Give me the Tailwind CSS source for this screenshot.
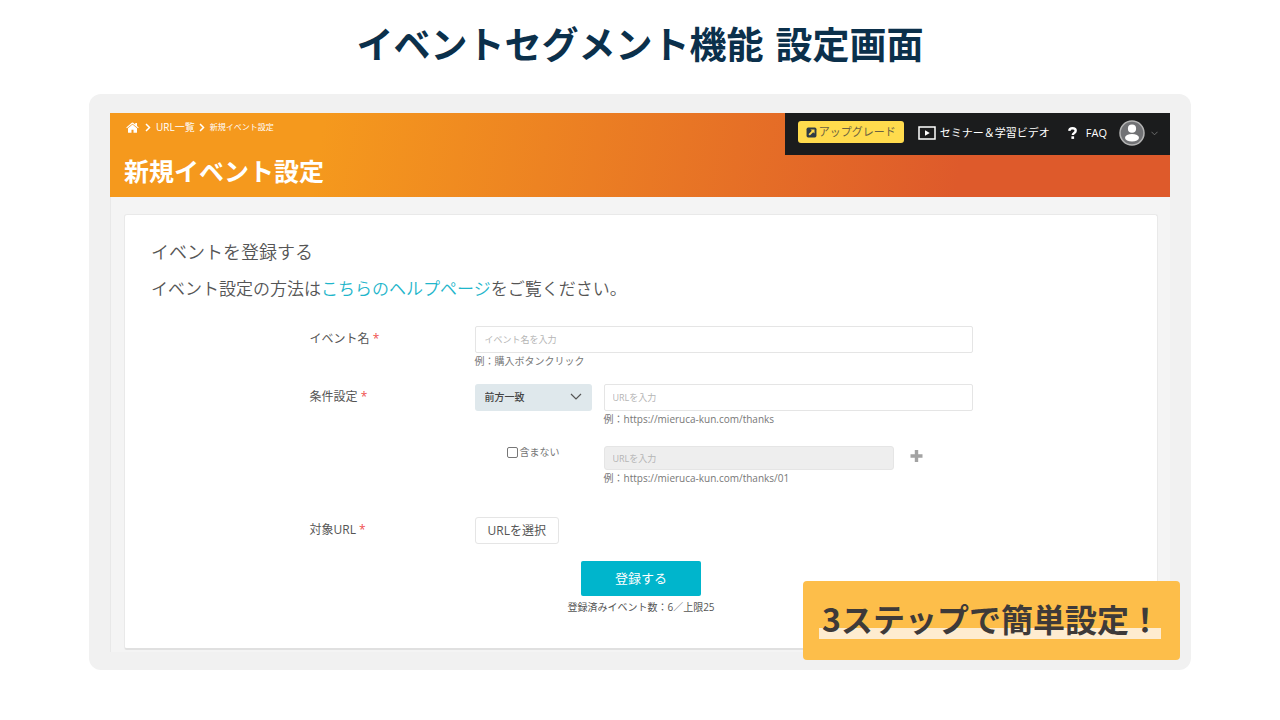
<!DOCTYPE html>
<html lang="ja">
<head>
  <meta charset="UTF-8">
  <meta name="viewport" content="width=device-width, initial-scale=1.0">
  <title>イベントセグメント機能 設定画面</title>
  <script src="https://cdn.jsdelivr.net/npm/@tailwindcss/browser@4"></script>
</head>
<body class="min-h-screen bg-white font-['Open_Sans','Noto_Sans_CJK_JP',sans-serif] text-[#555]">
  <div class="px-[89px] pt-[18px] pb-12">
    <h1 class="flex justify-center gap-3 text-[37px] leading-[50px] font-bold text-[#0b304b] font-['Noto_Sans_CJK_JP',sans-serif]">
      <span>イベントセグメント機能</span>
      <span>設定画面</span>
    </h1>

    <div class="relative mt-[26px] rounded-xl bg-[#f1f1f1] px-[21px] pt-[19px] pb-[18px]">
      <!-- Header -->
      <header class="flex h-[84px] items-start justify-between bg-linear-100/srgb from-[#f5991d] from-20% to-[#de5a2b] to-80% text-white">
        <div class="pl-[14px] pt-[7px]">
          <nav class="flex h-[14px] items-center gap-1 pl-[2px] text-[10px] leading-[14px]" aria-label="パンくず">
            <a href="#" aria-label="ホーム">
              <svg class="h-[11px] w-[13px]" viewBox="0 0 26 22" fill="currentColor">
                <path d="M13 5l-9 7.500v8a1 1 0 001 1h6v-6h4v6h6a1 1 0 001-1v-8zM25.500 11l-3.500-3V2h-3.500v3.200L14.500 1.500a2.200 2.200 0 00-3 0L.500 11l1.300 1.500L13 3.600l11.200 8.900z"/>
              </svg>
            </a>
            <svg class="h-[9px] w-[9px]" viewBox="0 0 9 9" fill="none" stroke="currentColor" stroke-width="1.500"><path d="M3 1l3.500 3.500L3 8"/></svg>
            <a href="#">URL一覧</a>
            <svg class="-ml-[2px] h-[9px] w-[9px]" viewBox="0 0 9 9" fill="none" stroke="currentColor" stroke-width="1.500"><path d="M3 1l3.500 3.500L3 8"/></svg>
            <span class="text-[8px]">新規イベント設定</span>
          </nav>
          <h2 class="mt-5 text-[25px] leading-[34px] font-bold">新規イベント設定</h2>
        </div>

        <div class="flex h-[42px] items-center bg-[#1b1c1d] pr-3 pb-[2px] pl-[13px] text-[11px]">
          <button type="button" class="-mt-[2px] flex h-[22px] items-center gap-[2px] rounded-[3px] bg-[#ffdb4d] px-2 text-[#6b6140]">
            <svg class="h-[11px] w-[11px] text-[#2f3b45]" viewBox="0 0 20 20">
              <rect x="1" y="1" width="18" height="18" rx="3" fill="currentColor"/>
              <path d="M8 4.500h7.500V12l-2.500-2.500-6 6L4.500 13l6-6z" fill="#ffdb4d"/>
            </svg>
            アップグレード
          </button>
          <a href="#" class="ml-[14px] flex items-center gap-1">
            <svg class="h-[14px] w-[18px]" viewBox="0 0 18 14" fill="none">
              <rect x="1" y="1" width="16" height="12" stroke="currentColor" stroke-width="1.500"/>
              <path d="M7 4.200v5.600L11.800 7z" fill="currentColor"/>
            </svg>
            セミナー＆学習ビデオ
          </a>
          <a href="#" class="ml-[18px] flex items-center gap-[9px]">
            <svg class="h-3 w-[9px]" viewBox="0 0 9 12" fill="none">
              <path d="M1.300 3.900C1.400 2.200 2.600 1.300 4.500 1.300c2 0 3.200 1 3.200 2.500 0 2.200-2.900 2-2.900 4.200" stroke="currentColor" stroke-width="2.400"/>
              <rect x="3.400" y="9.300" width="2.700" height="2.600" fill="currentColor"/>
            </svg>
            FAQ
          </a>
          <button type="button" class="ml-3 flex items-center gap-[6px]" aria-label="アカウント">
            <svg class="h-[26px] w-[26px]" viewBox="0 0 26 26">
              <circle cx="13" cy="13" r="12" fill="#717275" stroke="#b5b5b5" stroke-width="1.500"/>
              <circle cx="13" cy="8.700" r="4.100" fill="#fff"/>
              <ellipse cx="13" cy="17.800" rx="7" ry="3.800" fill="#fff"/>
            </svg>
            <svg class="h-[7px] w-[7px] text-[#777]" viewBox="0 0 8 8" fill="none" stroke="currentColor"><path d="M0.500 2l3.500 3.500L7.500 2"/></svg>
          </button>
        </div>
      </header>

      <!-- Form card -->
      <main class="border-l border-[#e8e8e8] bg-[#f4f4f4] pt-[17px] pr-3 pb-[2px] pl-[13px]">
        <div class="rounded-[3px] border border-b-2 border-[#e9e9e9] border-b-[#e0e0e0] bg-white px-[26px] pt-[22px] pb-[34px]">
          <h3 class="text-[18px] leading-[30px] font-[350]">イベントを登録する</h3>
          <p class="mt-2 text-[17px] leading-[28px] font-[350]">イベント設定の方法は<a href="#" class="text-[#1fb6cb]">こちらのヘルプページ</a>をご覧ください。</p>

          <form class="mx-auto mt-[23px] max-w-[663px] text-[10px] leading-[14px] text-[#777]">
            <div class="flex">
              <label for="event-name" class="w-[165px] shrink-0 pt-1 text-[12px] leading-[18px] text-[#555]">イベント名 <span class="text-[#f0504f]">*</span></label>
              <div class="grow">
                <input id="event-name" type="text" placeholder="イベント名を入力" class="block h-[27px] w-full rounded-[2px] border border-[#e5e5e5] px-[9px] text-[9px] placeholder:text-[#b5b5b5]">
                <p class="mt-[1px]">例：購入ボタンクリック</p>
              </div>
            </div>

            <div class="mt-4 flex">
              <label for="match-type" class="w-[165px] shrink-0 pt-1 text-[12px] leading-[18px] text-[#555]">条件設定 <span class="text-[#f0504f]">*</span></label>
              <div class="relative mr-3 w-[117px] shrink-0">
                <select id="match-type" class="h-[27px] w-full appearance-none rounded-[3px] bg-[#dfe8ec] px-[10px] pb-[2px] text-[10px] font-medium text-[#444]">
                  <option>前方一致</option>
                </select>
                <svg class="pointer-events-none absolute top-2 right-[10px] h-[10px] w-3 text-[#555]" viewBox="0 0 12 10" fill="none" stroke="currentColor" stroke-width="1.200"><path d="M1 2l5 5 5-5"/></svg>
              </div>
              <div class="grow">
                <input type="text" placeholder="URLを入力" aria-label="URL" class="block h-[27px] w-full rounded-[2px] border border-[#e5e5e5] px-2 text-[9px] placeholder:text-[#b5b5b5]">
                <p class="mt-[1px]">例：https://mieruca-kun.com/thanks</p>
              </div>
            </div>

            <div class="mt-5 flex pl-[197px]">
              <label class="flex w-[97px] shrink-0 items-center gap-[2px] self-start text-[10px] leading-3">
                <input type="checkbox" class="h-[11px] w-[11px] appearance-none rounded-[2px] border border-[#777] bg-white checked:bg-[#777]">含まない
              </label>
              <div class="w-[290px]">
                <input type="text" placeholder="URLを入力" aria-label="除外URL" disabled class="block h-6 w-full rounded-[3px] border border-[#e5e5e5] bg-[#eee] px-2 text-[9px] placeholder:text-[#b5b5b5]">
                <p class="mt-[1px]">例：https://mieruca-kun.com/thanks/01</p>
              </div>
              <button type="button" class="ml-4 h-5 text-[#a3a3a3]" aria-label="追加">
                <svg class="h-3 w-[13px]" viewBox="0 0 12 12" fill="currentColor"><path d="M4.300 0h3.400v4.300H12v3.400H7.700V12H4.300V7.700H0V4.300h4.300z"/></svg>
              </button>
            </div>

            <div class="mt-8 flex">
              <label for="target-url" class="w-[165px] shrink-0 pt-1 text-[12px] leading-[18px] text-[#555]">対象URL <span class="text-[#f0504f]">*</span></label>
              <button id="target-url" type="button" class="h-[27px] rounded-[3px] border border-[#e5e5e5] px-3 text-[12px] text-[#555]">URLを選択</button>
            </div>

            <div class="mt-[17px] text-center">
              <button type="submit" class="h-[35px] w-[120px] rounded-[2px] bg-[#00b5cc] pb-[2px] text-[13px] text-white">登録する</button>
              <p class="mt-1 text-[#555]">登録済みイベント数：6／上限25</p>
            </div>
          </form>
        </div>
      </main>

      <!-- Callout -->
      <div class="absolute right-[11px] bottom-[10px] h-[79px] rounded-[4px] bg-[#fdbe4a] pt-4 pr-[19px] pl-4">
        <strong class="block bg-linear-to-b from-transparent from-74% to-[#feecd0] to-74% pl-[3px] text-[32px] leading-[42px] font-bold text-[#3e3a39] font-['Noto_Sans_CJK_JP',sans-serif]">3ステップで簡単設定！</strong>
      </div>
    </div>
  </div>
</body>
</html>
